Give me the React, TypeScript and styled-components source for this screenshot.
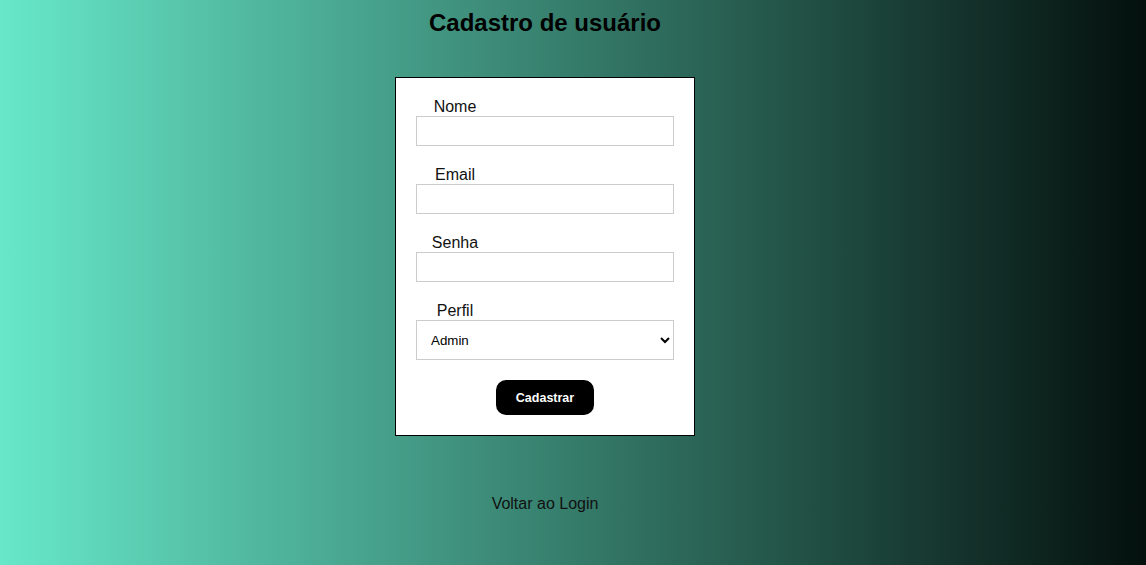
import React from "react";
import styled, { createGlobalStyle } from "styled-components";

const Global = createGlobalStyle`
  html, body { margin: 0; padding: 0; }
  body {
    min-height: 100vh;
    background: linear-gradient(to right, #67e8c9 0%, #04100d 100%);
    font-family: "Liberation Sans", Arial, sans-serif;
  }
`;

const Page = styled.div`
  min-height: 565px;
  display: flex;
  flex-direction: column;
  align-items: center;
  padding: 9px 56px 0 0;
  box-sizing: border-box;
`;

const Title = styled.h1`
  margin: 0;
  font-size: 24px;
  font-weight: bold;
  color: #000;
  line-height: 28px;
`;

const Card = styled.form`
  margin-top: 40px;
  width: 300px;
  box-sizing: border-box;
  background: #fff;
  border: 1px solid #000;
  padding: 20px;
  display: flex;
  flex-direction: column;
  gap: 20px;
`;

const Field = styled.div`
  display: flex;
  flex-direction: column;
`;

const Label = styled.label`
  display: block;
  width: 78px;
  text-align: center;
  font-size: 16px;
  line-height: 18px;
  color: #111;
`;

const Input = styled.input`
  box-sizing: border-box;
  width: 258px;
  height: 30px;
  border: 1px solid #ccc;
  border-radius: 0;
  padding: 0 8px;
  font-family: "Liberation Sans", Arial, sans-serif;
  font-size: 14px;
  outline: none;
  background: #fff;
`;

const Select = styled.select`
  box-sizing: border-box;
  width: 258px;
  height: 40px;
  border: 1px solid #ccc;
  border-radius: 0;
  padding: 0 8px 0 10px;
  font-family: "Liberation Sans", Arial, sans-serif;
  font-size: 13.33px;
  color: #000;
  background: #fff;
  outline: none;
`;

const Button = styled.button`
  align-self: center;
  width: 98px;
  height: 35px;
  padding: 0;
  border: none;
  border-radius: 10px;
  background: #000;
  color: #fff;
  font-family: "Liberation Sans", Arial, sans-serif;
  font-size: 12.5px;
  font-weight: bold;
  cursor: pointer;
`;

const BackLink = styled.a`
  margin-top: 59px;
  font-size: 16px;
  line-height: 18px;
  color: #111;
  text-decoration: none;
`;

export default function App() {
  return (
    <>
      <Global />
      <Page>
        <Title>Cadastro de usuário</Title>
        <Card onSubmit={(e) => e.preventDefault()}>
          <Field>
            <Label>Nome</Label>
            <Input type="text" />
          </Field>
          <Field>
            <Label>Email</Label>
            <Input type="email" />
          </Field>
          <Field>
            <Label>Senha</Label>
            <Input type="password" />
          </Field>
          <Field>
            <Label>Perfil</Label>
            <Select defaultValue="admin">
              <option value="admin">Admin</option>
              <option value="user">Usuário</option>
            </Select>
          </Field>
          <Button type="submit">Cadastrar</Button>
        </Card>
        <BackLink href="#">Voltar ao Login</BackLink>
      </Page>
    </>
  );
}
